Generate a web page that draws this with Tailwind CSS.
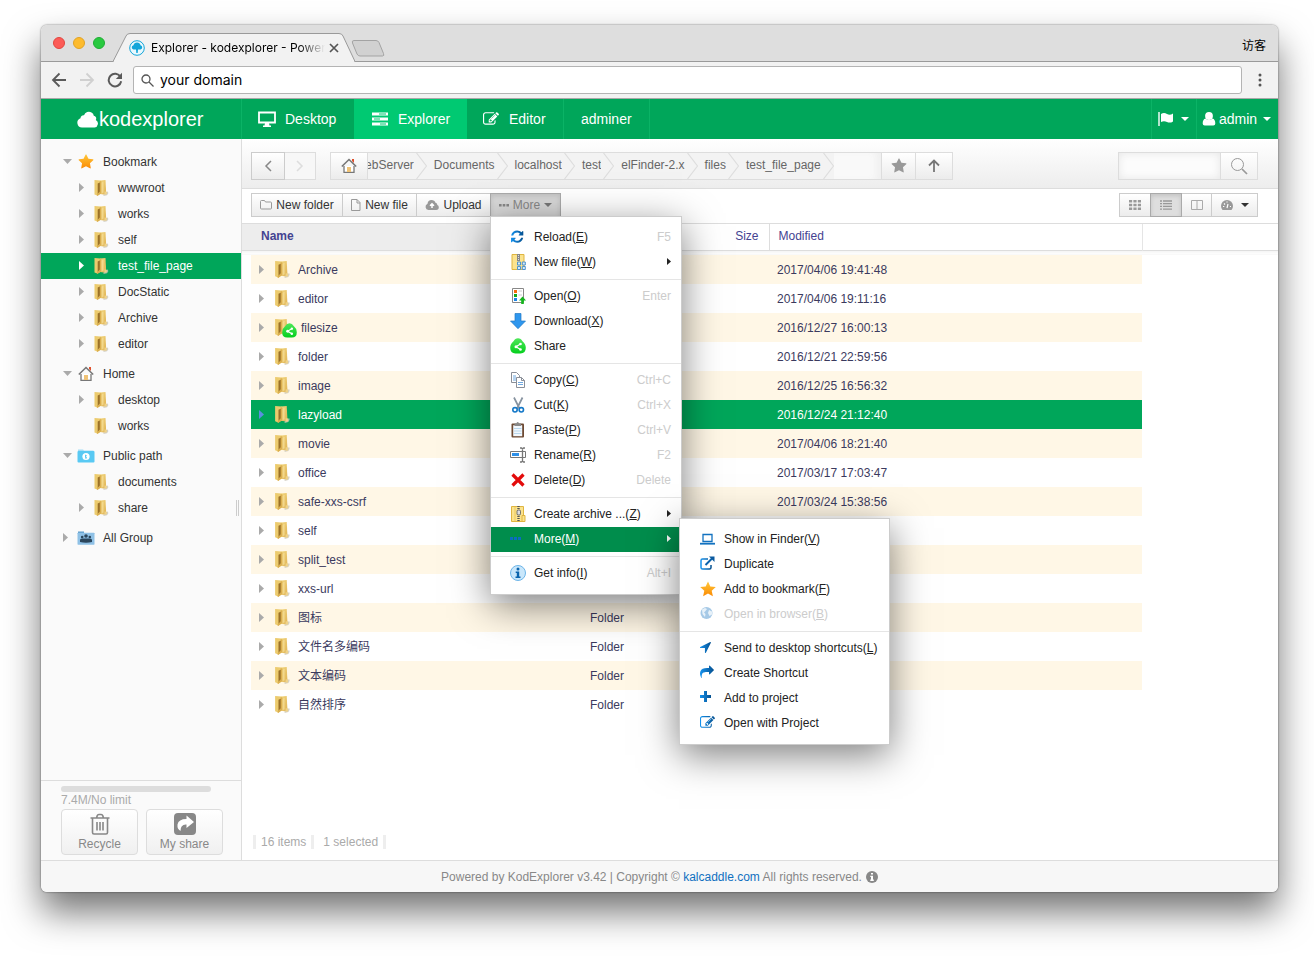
<!DOCTYPE html>
<html lang="en">
<head>
<meta charset="utf-8">
<title>Explorer - kodexplorer</title>
<script src="https://cdn.jsdelivr.net/npm/@tailwindcss/browser@4"></script>
</head>
<body class="bg-white font-['Liberation_Sans','Noto_Sans_CJK_SC',sans-serif] text-xs text-[#333]">

<!-- Shared icon symbols -->
<svg width="0" height="0" class="absolute" aria-hidden="true">
  <defs>
    <linearGradient id="gold" x1="0" x2="1" y1="0" y2="1"><stop offset="0" stop-color="#f3d780"/><stop offset="1" stop-color="#e0b455"/></linearGradient>
    <linearGradient id="blue" x1="0" x2="1" y1="0" y2="0"><stop offset="0" stop-color="#1592ee"/><stop offset="1" stop-color="#05508f"/></linearGradient>
    <linearGradient id="sun" x1="0" x2="0" y1="0" y2="1"><stop offset="0" stop-color="#ffc83a"/><stop offset="1" stop-color="#fb8a04"/></linearGradient>
    <linearGradient id="lime" x1="0" x2="0" y1="0" y2="1"><stop offset="0" stop-color="#4fe75a"/><stop offset="1" stop-color="#04cf1d"/></linearGradient>
  </defs>
  <symbol id="folder" viewBox="0 0 16 18">
    <path d="M10 14l4.500-1.500q1 2-1 3.700L10 17z" fill="#c9c5b8" opacity=".8"/>
    <path d="M6.500 1.500L12 1l.7 13-2.700 1.500-3.500-.5z" fill="url(#gold)"/>
    <path d="M1 1l6 .5v13.500l-3 1.500-3-1z" fill="#eccb6e"/>
    <path d="M4.200 4.500L7.300 3v9.500l-3.100 2.700z" fill="#9a7129"/>
    <path d="M6.300 2l1.700.5v11.500l-4 3-1-1 3.300-3.500z" fill="#dbaf4f"/>
    <path d="M8 3.500l2-1v11l-2 1z" fill="#f6e09a" opacity=".7"/>
    <path d="M11 12.500l2.300.3v2.500L11 16z" fill="#efd289"/>
  </symbol>
  <symbol id="star" viewBox="0 0 1792 1792"><path d="M1728 647q0 22-26 48l-363 354 86 500q1 7 1 20 0 21-10.500 35.500t-30.500 14.500q-19 0-40-12l-449-236-449 236q-22 12-40 12-21 0-31.500-14.500t-10.500-35.500q0-6 2-20l86-500-364-354q-25-27-25-48 0-37 56-46l502-73 225-455q19-41 49-41t49 41l225 455 502 73q56 9 56 46z"/></symbol>
  <symbol id="house" viewBox="0 0 16 16">
    <path d="M11 1h2v4l-2-2z" fill="#e0502c"/>
    <path d="M3 8v6.300h10V8" fill="#fff" stroke="#777" stroke-width="1.300"/>
    <path d="M.8 8.500L8 1.500l7.200 7" fill="none" stroke="#777" stroke-width="1.600"/>
    <path d="M6 9h4v5H6z" fill="#f0c376"/>
  </symbol>
  <symbol id="pubfolder" viewBox="0 0 18 14">
    <path d="M1 .5h5l1 1h9.500v3H1z" fill="#a5def5"/><rect x=".5" y="2" width="17" height="11.500" rx="1" fill="#59c9f3"/>
    <circle cx="9" cy="7.500" r="3.600" fill="#fff"/><path d="M8 5.500l2 1-1 1 1.200 1.500-1.600 1-.6-2z" fill="#59c9f3"/>
  </symbol>
  <symbol id="groupfolder" viewBox="0 0 18 14">
    <path d="M1 .5h6v3H1z" fill="#5d9ccb"/><rect x=".5" y="1.700" width="17" height="12" rx=".6" fill="#8fc1e6"/>
    <g fill="#2b465c"><circle cx="9" cy="5" r="1.800"/><circle cx="5.200" cy="6" r="1.300"/><circle cx="12.800" cy="6" r="1.300"/><path d="M3 11V9q0-1.500 2-1.500h8q2 0 2 1.500v2q-6 1.500-12 0z"/></g>
  </symbol>
  <symbol id="edit" viewBox="0 0 1792 1792"><path d="M888 1184l116-116-152-152-116 116v56h96v96h56zm440-720q-16-16-33 1l-350 350q-17 17-1 33t33-1l350-350q17-17 1-33zm80 594v190q0 119-84.500 203.500t-203.500 84.500h-832q-119 0-203.500-84.500t-84.500-203.500v-832q0-119 84.500-203.500t203.500-84.500h832q63 0 117 25 15 7 18 23 3 17-9 29l-49 49q-14 14-32 8-23-6-45-6h-832q-66 0-113 47t-47 113v832q0 66 47 113t113 47h832q66 0 113-47t47-113v-126q0-13 9-22l64-64q15-15 35-7t20 29zm-96-738l288 288-672 672h-288v-288zm444 132l-92 92-288-288 92-92q28-28 68-28t68 28l152 152q28 28 28 68t-28 68z"/></symbol>
  <symbol id="fwd" viewBox="0 0 1792 1792"><path d="M1792 640q0 26-19 45l-512 512q-19 19-45 19t-45-19-19-45v-256h-224q-98 0-175.500 6t-154 21.500-133 42.500-105.500 69.500-80 101-48.500 138.500-17.500 181q0 55 5 123 0 6 2.500 23.500t2.500 26.500q0 15-8.500 25t-23.500 10q-16 0-28-17-7-9-13-22t-13.500-30-10.500-24q-127-285-127-451 0-199 53-333 162-403 875-403h224v-256q0-26 19-45t45-19 45 19l512 512q19 19 19 45z"/></symbol>
  <symbol id="sharebadge" viewBox="0 0 16 16">
    <path d="M8 .3q3 0 4.500 3 3.300 2.700 3.300 6.500 0 5.700-5.300 5.700h-5Q.2 15.500.2 9.800.2 6 3.500 3.300 5 .3 8 .3z" fill="url(#lime)"/>
    <path d="M10.500 6L6 8.800l4.500 2.700" fill="none" stroke="#fff" stroke-width="1.200"/><g fill="#fff"><circle cx="10.500" cy="6" r="1.300"/><circle cx="6" cy="8.800" r="1.500"/><circle cx="10.500" cy="11.500" r="1.300"/></g>
  </symbol>
  <symbol id="zip" viewBox="0 0 16 16">
    <path d="M1.500.5h12v15h-12z" fill="#fbe38e" stroke="#dfb540"/><path d="M12 9.500h3v6h-3z" fill="#fbe38e" stroke="#dfb540"/><path d="M5 1v14" stroke="#ebc95c"/>
    <path d="M8.500 0v16" stroke="#555" stroke-width="2.400" stroke-dasharray="1 1"/><rect x="7" y="4" width="3.500" height="5" rx="1.200" fill="#ddd" stroke="#555" stroke-width=".8"/>
  </symbol>
</svg>

<div class="flex min-h-screen flex-col pt-[25px] pr-9 pb-[66px] pl-[41px]">
<div class="flex flex-1 flex-col rounded-md bg-white shadow-[0_0_2px_rgba(0,0,0,0.6),0_20px_36px_rgba(0,0,0,0.55)]">

  <!-- Tab strip -->
  <div class="flex h-[37px] items-end rounded-t-md border-b border-[#9a9a9a] bg-[#dedede]">
    <div class="flex gap-2 self-center pl-3">
      <span class="size-3 rounded-full border border-[#e2463f] bg-[#fc5b57]"></span>
      <span class="size-3 rounded-full border border-[#e1a325] bg-[#fdbb2e]"></span>
      <span class="size-3 rounded-full border border-[#1fae34] bg-[#29c940]"></span>
    </div>
    <div class="relative ml-2 -mb-px h-[29px] w-[242px]">
      <svg class="absolute inset-0 h-full w-full" viewBox="0 0 242 29" fill="none" aria-hidden="true"><path d="M0 28.500L13 3Q14 .5 17 .5H226q3 0 4 2.500l12 25.500" fill="#f2f2f2" stroke="#9a9a9a"/><path d="M1 28.500H241" stroke="#f2f2f2" stroke-width="1.500"/></svg>
      <div class="relative flex h-full items-center pl-4 font-['Inter',sans-serif] text-black">
        <svg class="mr-1.5 size-4" viewBox="0 0 16 16" aria-hidden="true"><circle cx="8" cy="8" r="7.300" fill="#e9f8fd" stroke="#12a5d9"/><path d="M4.500 9.500a2.200 2.200 0 010-4.300 3.600 3.600 0 017 0 2.200 2.200 0 010 4.300H9l-.3 3.500H7.300L7 9.500z" fill="#12a5d9"/></svg>
        <span class="w-[174px] overflow-hidden whitespace-nowrap [mask-image:linear-gradient(to_right,black_85%,transparent)]">Explorer - kodexplorer - Powered</span>
        <button class="ml-1" aria-label="Close tab"><svg class="size-2.5" viewBox="0 0 10 10"><path d="M1 1l8 8m0-8L1 9" stroke="#555" stroke-width="1.700"/></svg></button>
      </div>
    </div>
    <svg class="mb-1 -ml-1 h-[17px] w-[34px]" viewBox="0 0 34 17" aria-hidden="true"><path d="M3 .5h22q2 0 3 2l4.500 11q1 2.500-1 2.500H9q-2 0-3-2L1.500 3Q.5.500 3 .5z" fill="#d1d1d1" stroke="#a3a3a3"/></svg>
    <span class="mr-3 ml-auto self-center pt-1 font-['Noto_Sans_CJK_SC',sans-serif] leading-5 text-black">访客</span>
  </div>

  <!-- Address bar -->
  <div class="flex h-[37px] items-center border-b border-[#a8a8a8] bg-[#f2f2f2] pl-2.5">
    <button class="mr-3" aria-label="Back"><svg class="size-4" viewBox="0 0 16 16" fill="none" stroke="#5a5a5a" stroke-width="1.800"><path d="M15 8H2M8.500 1.500L2 8l6.500 6.500"/></svg></button>
    <button class="mr-3" aria-label="Forward"><svg class="size-4" viewBox="0 0 16 16" fill="none" stroke="#d0d0d0" stroke-width="1.800"><path d="M1 8h13M7.500 1.500L14 8l-6.500 6.500"/></svg></button>
    <button class="mr-2.5" aria-label="Reload"><svg class="size-4" viewBox="0 0 16 16" fill="none"><path d="M13.500 5A6.300 6.300 0 1014.200 9.300" stroke="#5a5a5a" stroke-width="2"/><path d="M15 .8v6.200H8.800z" fill="#5a5a5a"/></svg></button>
    <label class="flex h-7 flex-1 items-center gap-1.5 rounded-[3px] border border-[#b4b4b4] bg-white pl-[7px]">
      <svg class="size-[13px]" viewBox="0 0 13 13" fill="none" stroke="#555" stroke-width="1.300" aria-hidden="true"><circle cx="5" cy="5" r="4"/><path d="M8 8l4.500 4.500"/></svg>
      <input class="flex-1 font-['Inter',sans-serif] text-sm text-black outline-none" value="your domain" aria-label="Address">
    </label>
    <button class="px-4" aria-label="Browser menu"><svg class="h-3.5 w-1" viewBox="0 0 4 14" fill="#555"><circle cx="2" cy="2" r="1.500"/><circle cx="2" cy="7" r="1.500"/><circle cx="2" cy="12" r="1.500"/></svg></button>
  </div>

  <!-- Application header -->
  <header class="flex h-10 items-stretch bg-[#00a65a] text-sm text-white">
    <a href="#" class="flex w-[201px] items-center border-r border-[#0bb366] pl-9 text-xl">
      <svg class="h-[17px] w-[22px]" viewBox="0 0 22 17" fill="#fff" aria-hidden="true"><path d="M5 16.500a4.800 4.800 0 01-1.500-9.300 3 3 0 013.500-3A5.200 5.200 0 0114.500 1.500q2 1 2.300 3.300a2.800 2.800 0 012 4.200 4 4 0 01-1.300 7.500z"/></svg>kodexplorer</a>
    <nav class="flex flex-1 items-stretch">
      <a href="#" class="flex w-28 items-center gap-[9px] pl-4"><svg class="h-4 w-[18px]" viewBox="0 0 18 16" aria-hidden="true"><path d="M1 1.500h16v10H1z" fill="none" stroke="#fff" stroke-width="1.800"/><path d="M7 12h4l.5 2.500H13V16H5v-1.500h1.500z" fill="#fff"/></svg>Desktop</a>
      <a href="#" class="flex w-[113px] items-center gap-2.5 bg-[#00c972] pl-[18px]"><svg class="h-3.5 w-4" viewBox="0 0 16 14" aria-hidden="true"><path d="M0 .5h16v3H0zM0 5.500h16v3H0zM0 10.500h16v3H0z" fill="#fff"/><path d="M7 2h7M2 7h6M8 12h6" stroke="#00c972"/></svg>Explorer</a>
      <a href="#" class="flex w-[97px] items-center gap-2.5 border-r border-[#0bb366] pl-4"><svg class="size-4" fill="#fff" aria-hidden="true"><use href="#edit"/></svg>Editor</a>
      <a href="#" class="flex w-[86px] items-center border-r border-[#0bb366] pl-[17px]">adminer</a>
    </nav>
    <button class="flex w-[46px] items-center gap-[7px] border-x border-[#0bb366] pl-1.5" aria-label="Language"><svg class="h-3.5 w-4 shrink-0" viewBox="0 0 16 14" aria-hidden="true"><path d="M1 0v14" stroke="#fff" stroke-width="1.400"/><path d="M3 2q3-2 6 0 3 1.500 6-.6v8q-3 2-6 .6-3-1.500-6 0z" fill="#fff"/></svg><svg class="h-1 w-2 shrink-0" viewBox="0 0 8 4" fill="#fff"><path d="M0 0h8L4 4z"/></svg></button>
    <button class="flex w-[81px] items-center gap-0.5 pl-1"><svg class="size-4" fill="#fff" viewBox="0 0 16 16" aria-hidden="true"><circle cx="8" cy="5" r="3.900"/><path d="M4.500 7.500Q8 10.500 11.500 7.500 14.300 8.300 14.300 12.500q0 2-2 2H3.700q-2 0-2-2 0-4.200 2.800-5z"/></svg>admin<svg class="ml-1 h-1 w-2" viewBox="0 0 8 4" fill="#fff" aria-hidden="true"><path d="M0 0h8L4 4z"/></svg></button>
  </header>

  <div class="flex flex-1">
    <!-- Sidebar -->
    <aside class="relative flex w-[201px] flex-col border-r border-[#ddd] bg-[#fafafa]">
      <ul id="tree" class="flex-1 pt-2.5"></ul>
      <span class="absolute top-1/2 right-0.5 h-4 w-[3px] border-x border-[#ccc]"></span>
      <div class="h-20 border-t border-[#ddd] px-5 pt-[5px]">
        <div class="h-1.5 w-[150px] rounded-full bg-[#ddd]"></div>
        <p class="pt-0.5 leading-3 text-[#aaa]">7.4M/No limit</p>
        <div class="mt-[3px] flex gap-2 text-[#888]">
          <button class="flex h-[46px] w-[77px] shrink-0 flex-col items-center rounded-sm border border-[#ddd] bg-linear-to-b from-white to-[#f0f0f0] pt-[3px] leading-[18px]"><svg class="size-[22px]" viewBox="0 0 22 22" fill="none" stroke="#888" stroke-width="1.600" aria-hidden="true"><path d="M1.500 5h19M7.500 5l.8-2.500q.3-1 1.500-1h2.400q1.200 0 1.500 1l.8 2.500M3.500 5v14.500q0 1.500 1.500 1.500h12q1.500 0 1.500-1.500V5M8 9v8.500M11 9v8.500M14 9v8.500"/></svg>Recycle</button>
          <button class="flex h-[46px] w-[77px] shrink-0 flex-col items-center rounded-sm border border-[#ddd] bg-linear-to-b from-white to-[#f0f0f0] pt-[3px] leading-[18px]"><svg class="size-[22px]" viewBox="0 0 22 22" aria-hidden="true"><rect width="22" height="22" rx="4" fill="#888"/><path d="M12.500 2.500l7.500 6.500-7.500 6v-3.500q-6-.5-6 6.500Q3 16 3.500 11.500 4.500 6 12.500 6z" fill="#fff"/></svg>My share</button>
        </div>
      </div>
    </aside>

    <!-- File area -->
    <main class="flex min-w-0 flex-1 flex-col">
      <div class="flex h-[50px] items-center border-b border-[#ddd] bg-linear-to-b from-white to-[#ededed] pt-1 pr-5 pl-[9px]">
        <button class="flex h-7 w-[34px] items-center justify-center border border-[#ccc] bg-linear-to-b from-white to-[#ececec]" aria-label="Back"><svg class="h-3 w-2" viewBox="0 0 8 12" fill="none" stroke="#888" stroke-width="1.500"><path d="M7 1L2 6l5 5"/></svg></button>
        <button class="mr-3.5 flex h-7 w-[31px] items-center justify-center border border-l-0 border-[#ddd] bg-[#f7f7f7]" aria-label="Forward"><svg class="h-3 w-2" viewBox="0 0 8 12" fill="none" stroke="#ddd" stroke-width="1.500"><path d="M1 1l5 5-5 5"/></svg></button>
        <button class="z-10 flex h-7 w-[38px] items-center justify-center border border-[#ddd] bg-linear-to-b from-white to-[#ececec]" aria-label="Home"><svg class="size-4" aria-hidden="true"><use href="#house"/></svg></button>
        <nav id="crumbs" aria-label="Path" class="flex h-7 w-[513px] overflow-hidden border-y border-[#ddd] bg-[#f9f9f9] text-[#666] shadow-[inset_-8px_0_8px_-4px_#eee]"></nav>
        <button class="flex h-7 w-[35px] items-center justify-center border border-[#ddd] bg-linear-to-b from-white to-[#ececec]" aria-label="Bookmark"><svg class="size-4" fill="#999" aria-hidden="true"><use href="#star"/></svg></button>
        <button class="flex h-7 w-[37px] items-center justify-center border border-l-0 border-[#ddd] bg-linear-to-b from-white to-[#ececec]" aria-label="Up"><svg class="h-[13px] w-3" viewBox="0 0 12 13" fill="none" stroke="#777" stroke-width="1.800"><path d="M6 13V1.500M1 6.500l5-5 5 5"/></svg></button>
        <input type="search" aria-label="Search" class="ml-auto h-7 w-[103px] border border-[#ddd] bg-[#fcfcfc] px-2 shadow-[inset_0_0_8px_#e6e6e6] outline-none">
        <button class="flex h-7 w-[37px] items-center justify-center border border-l-0 border-[#ddd] bg-linear-to-b from-white to-[#f0f0f0]" aria-label="Search"><svg class="size-[18px]" viewBox="0 0 18 18" fill="none" stroke="#999"><circle cx="7.500" cy="7.500" r="6"/><path d="M12 12l5 5" stroke-width="1.700"/></svg></button>
      </div>

      <div class="flex h-[35px] items-center border-b border-[#ddd] bg-white pr-5 pb-0.5 pl-[9px]">
        <button class="flex h-6 w-[92px] items-center justify-center gap-1 border border-[#ccc] bg-linear-to-b from-white to-[#ececec] whitespace-nowrap"><svg class="h-3 w-3 shrink-0" viewBox="0 0 12 12" fill="none" stroke="#999" aria-hidden="true"><path d="M.5 2.500q0-1 1-1h3l1 1.500h5q1 0 1 1v5q0 1-1 1h-9q-1 0-1-1z"/></svg>New folder</button>
        <button class="flex h-6 w-[74px] items-center justify-center gap-1 border border-l-0 border-[#ccc] bg-linear-to-b from-white to-[#ececec] whitespace-nowrap"><svg class="h-3 w-2.5 shrink-0" viewBox="0 0 10 12" fill="none" stroke="#999" aria-hidden="true"><path d="M.5.5h5.500l3 3v8H.500zM6 .5V4h3"/></svg>New file</button>
        <button class="flex h-6 w-[73px] items-center justify-center gap-1 border border-x-0 border-[#ccc] bg-linear-to-b from-white to-[#ececec]"><svg class="h-3 w-3.5 shrink-0" viewBox="0 0 14 12" aria-hidden="true"><path d="M3.500 11a3.300 3.300 0 01-1-6.300Q3 1 6.500 1q3 0 4 2.800Q12.500 4 12.300 6q1.500.6 1.500 2.300 0 2.700-2.600 2.700z" fill="#999"/><path d="M7 9V5M5 6.800l2-2 2 2" stroke="#fff" stroke-width="1.500" fill="none"/></svg>Upload</button>
        <div class="relative">
          <button class="flex h-6 w-[71px] items-center justify-center gap-1 border border-[#aaa] bg-[#d9d9d9] text-[#888] shadow-[inset_0_2px_5px_rgba(0,0,0,0.12)]" aria-expanded="true" aria-haspopup="menu"><svg class="h-[3px] w-2.5" viewBox="0 0 10 3" fill="#888" aria-hidden="true"><path d="M0 0h2.600v2.600H0zM3.700 0h2.600v2.600H3.700zM7.400 0H10v2.600H7.400z"/></svg>More<svg class="h-1 w-2" viewBox="0 0 8 4" fill="#777" aria-hidden="true"><path d="M0 0h8L4 4z"/></svg></button>

          <!-- "More" drop-down -->
          <div role="menu" class="absolute top-[23px] left-0 z-20 w-48 border border-[#ccc] bg-white py-2 text-[#222] shadow-[0_10px_36px_rgba(0,0,0,0.5)]">
            <button role="menuitem" class="flex h-[25px] w-full items-center pr-2.5 pb-0.5 pl-[19px]"><svg class="mr-2 h-4 w-4" viewBox="0 -60 2000 2000" fill="url(#blue)"><path d="M1639 1056q0 5-1 7-64 268-268 434.500t-478 166.500q-146 0-282.500-55t-243.500-157l-129 129q-19 19-45 19t-45-19-19-45v-448q0-26 19-45t45-19h448q26 0 45 19t19 45-19 45l-137 137q71 66 161 102t187 36q134 0 250-65t186-179q11-17 53-117 8-23 30-23h192q13 0 22.500 9.500t9.500 22.500zm25-800v448q0 26-19 45t-45 19h-448q-26 0-45-19t-19-45 19-45l138-138q-148-137-349-137-134 0-250 65t-186 179q-11 17-53 117-8 23-30 23h-199q-13 0-22.500-9.500t-9.500-22.500v-7q65-268 270-434.500t480-166.500q146 0 284 55.500t245 156.500l130-129q19-19 45-19t45 19 19 45z"/></svg><span>Reload(<u>E</u>)</span><span class="ml-auto text-[#ccc]">F5</span></button>
            <button role="menuitem" class="flex h-[25px] w-full items-center pr-2.5 pb-0.5 pl-[19px]"><svg class="mr-2 size-4" viewBox="0 0 16 16"><path d="M2 .5h12v15H2z" fill="#fbe38e" stroke="#dfb540"/><path d="M8.500 0v7" stroke="#888" stroke-width="3"/><path d="M8.500 1v5" stroke="#ddd" stroke-dasharray="1 1"/><path d="M7.500 8h3v3h-3zM12.300 8h3v3h-3zM7.500 12.500h3v3h-3zM12.300 12.500h3v3h-3z" fill="#d5eafa" stroke="#4f93cc"/></svg><span>New file(<u>W</u>)</span><svg class="ml-auto h-[7px] w-1" viewBox="0 0 4 7"><path d="M0 0l4 3.500L0 7z" fill="#222"/></svg></button>
            <hr class="my-1 border-[#e5e5e5]">
            <button role="menuitem" class="flex h-[25px] w-full items-center pr-2.5 pb-0.5 pl-[19px]"><svg class="mr-2 size-4" viewBox="0 0 16 16"><path d="M2.500.5h11v14h-11z" fill="#fff" stroke="#888"/><path d="M4 2h3v3H4z" fill="#f76a0c"/><path d="M4 6h3v3H4z" fill="#14a81c"/><path d="M4 10h3v3H4z" fill="#1d86e8"/><path d="M8.500 3H12M8.500 7H12" stroke="#ccc"/><path d="M12.500 8.500l3.500 4h-2.200V16h-2.600v-3.500H9z" fill="#14b51c"/></svg><span>Open(<u>O</u>)</span><span class="ml-auto text-[#ccc]">Enter</span></button>
            <button role="menuitem" class="flex h-[25px] w-full items-center pr-2.5 pb-0.5 pl-[19px]"><svg class="mr-2 size-4" viewBox="0 0 16 16"><path d="M5 .5h6V8h4.500L8 15.700.5 8H5z" fill="#2f97ee" stroke="#2279c4" stroke-width=".7"/></svg><span>Download(<u>X</u>)</span></button>
            <button role="menuitem" class="flex h-[25px] w-full items-center pr-2.5 pb-0.5 pl-[19px]"><svg class="mr-2 size-4"><use href="#sharebadge"/></svg>Share</button>
            <hr class="my-1 border-[#e5e5e5]">
            <button role="menuitem" class="flex h-[25px] w-full items-center pr-2.5 pb-0.5 pl-[19px]"><svg class="mr-2 size-4" viewBox="0 0 16 16" fill="#fff" stroke="#8a8f98"><path d="M1.500.5h5l3 3v7h-8z"/><path d="M6.500 5.500h5l3 3v7h-8z"/><path d="M11.500 5.500v3h3" fill="none"/><path d="M3 4h3M3 6h3M3 8h3M8 10.500h5M8 12.500h5" stroke="#6fa8e0"/></svg><span>Copy(<u>C</u>)</span><span class="ml-auto text-[#ccc]">Ctrl+C</span></button>
            <button role="menuitem" class="flex h-[25px] w-full items-center pr-2.5 pb-0.5 pl-[19px]"><svg class="mr-2 size-4" viewBox="0 0 16 16" fill="none"><path d="M4 .5l5.500 11M12.500.5L7 11.500" stroke="#8793a0" stroke-width="1.700"/><circle cx="5" cy="12.800" r="2.200" stroke="#1478c8" stroke-width="1.600"/><circle cx="11.300" cy="12.800" r="2.200" stroke="#1478c8" stroke-width="1.600"/></svg><span>Cut(<u>K</u>)</span><span class="ml-auto text-[#ccc]">Ctrl+X</span></button>
            <button role="menuitem" class="flex h-[25px] w-full items-center pr-2.5 pb-0.5 pl-[19px]"><svg class="mr-2 size-4" viewBox="0 0 16 16"><rect x="1.500" y="1.500" width="12.500" height="14" rx="1" fill="#6d4a33"/><path d="M3.200 3.200h9v11h-9z" fill="#f2f8fd"/><path d="M4 6.500h7.500M4 9h7.500M4 11.500h7.500" stroke="#b9d8ee"/><path d="M4.500 1.500h2q0-1.500 1.200-1.500T9 1.500h2V4H4.500z" fill="#888"/></svg><span>Paste(<u>P</u>)</span><span class="ml-auto text-[#ccc]">Ctrl+V</span></button>
            <button role="menuitem" class="flex h-[25px] w-full items-center pr-2.5 pb-0.5 pl-[19px]"><svg class="mr-2 size-4" viewBox="0 0 16 16" fill="none" stroke="#777"><path d="M.5 4.500h15v6H.5z" fill="#fff"/><path d="M2 6h7v3H2z" fill="#2c8fe8" stroke="none"/><path d="M12.500 1.500v13M10 1h1.500l1 1 1-1H15M10 15h1.500l1-1 1 1H15" stroke-width="1.300"/></svg><span>Rename(<u>R</u>)</span><span class="ml-auto text-[#ccc]">F2</span></button>
            <button role="menuitem" class="flex h-[25px] w-full items-center pr-2.5 pb-0.5 pl-[19px]"><svg class="mr-2 size-4" viewBox="0 0 16 16"><path d="M2.500 2.500l11 11m0-11l-11 11" stroke="#e30b0b" stroke-width="3.200"/></svg><span>Delete(<u>D</u>)</span><span class="ml-auto text-[#ccc]">Delete</span></button>
            <hr class="my-1 border-[#e5e5e5]">
            <button role="menuitem" class="flex h-[25px] w-full items-center pr-2.5 pb-0.5 pl-[19px]"><svg class="mr-2 size-4"><use href="#zip"/></svg><span>Create archive ...(<u>Z</u>)</span><svg class="ml-auto h-[7px] w-1" viewBox="0 0 4 7"><path d="M0 0l4 3.500L0 7z" fill="#222"/></svg></button>
            <div class="relative">
              <button role="menuitem" aria-expanded="true" class="flex h-[25px] w-full items-center bg-[#008d4c] pr-2.5 pb-0.5 pl-[19px] text-white"><svg class="mr-2 size-4" viewBox="0 0 16 16" fill="#0a6cc0"><path d="M0 6h3v3H0zM4 6h3v3H4zM8 6h3v3H8z"/></svg><span>More(<u>M</u>)</span><svg class="ml-auto h-[7px] w-1" viewBox="0 0 4 7"><path d="M0 0l4 3.500L0 7z" fill="#fff"/></svg></button>
              <div role="menu" class="absolute -top-[9px] left-[188px] w-[211px] border border-[#ccc] bg-white py-2 shadow-[0_10px_36px_rgba(0,0,0,0.5)]">
                <button role="menuitem" class="flex h-[25px] w-full items-center pb-0.5 pl-5 whitespace-nowrap"><svg class="mr-2 size-4" viewBox="0 0 16 16" fill="none" stroke="#1272c0" stroke-width="1.300"><path d="M3 3.500h9v7H3z"/><path d="M0 12.700h15" stroke-width="1.800"/></svg><span>Show in Finder(<u>V</u>)</span></button>
                <button role="menuitem" class="flex h-[25px] w-full items-center pb-0.5 pl-5 whitespace-nowrap"><svg class="mr-2 size-4" viewBox="0 0 16 16" fill="none" stroke="url(#blue)"><path d="M8 3H2.500Q1 3 1 4.500v7Q1 13 2.500 13h7q1.500 0 1.500-1.500V9" stroke-width="1.500"/><path d="M5.500 9L12 2.500" stroke="#0b62ac" stroke-width="2"/><path d="M9 .5h5.500V6z" fill="#0b5a9f" stroke="none"/></svg>Duplicate</button>
                <button role="menuitem" class="flex h-[25px] w-full items-center pb-0.5 pl-5 whitespace-nowrap"><svg class="mr-2 size-4" viewBox="0 0 16 16" fill="url(#sun)"><path d="M8 .5l2.300 5 5.500.6-4.100 3.700 1.200 5.500L8 12.500l-4.900 2.800 1.200-5.500L.2 6.100l5.500-.6z"/></svg><span>Add to bookmark(<u>F</u>)</span></button>
                <button role="menuitem" disabled class="flex h-[25px] w-full items-center pb-0.5 pl-5 whitespace-nowrap text-[#ccc]"><svg class="mr-2 size-4" viewBox="0 0 16 16"><circle cx="6.500" cy="7" r="6" fill="#a6c9e6"/><path d="M2 3.500l3-1.500 2 1-1.500 2L4 6.500l1.500 1.500-.5 3L2.500 8zM9 4l3 1.500v3L9.500 10 8 7z" fill="#e7f1f9"/></svg><span>Open in browser(<u>B</u>)</span></button>
                <hr class="my-1 border-[#e5e5e5]">
                <button role="menuitem" class="flex h-[25px] w-full items-center pb-0.5 pl-5 whitespace-nowrap"><svg class="mr-2 size-4" viewBox="200 0 2048 2048" fill="url(#blue)"><path d="M1593 349l-640 1280q-17 35-57 35-5 0-15-2-22-5-35.500-22.500t-13.500-39.500v-576h-576q-22 0-39.500-13.500t-22.500-35.500 4-42 29-30l1280-640q13-7 29-7 27 0 45 19 15 14 18.500 34.500t-6.500 39.500z"/></svg><span>Send to desktop shortcuts(<u>L</u>)</span></button>
                <button role="menuitem" class="flex h-[25px] w-full items-center pb-0.5 pl-5 whitespace-nowrap"><svg class="mr-2 size-4" fill="url(#blue)"><use href="#fwd" width="14" height="14"/></svg>Create Shortcut</button>
                <button role="menuitem" class="flex h-[25px] w-full items-center pb-0.5 pl-5 whitespace-nowrap"><svg class="mr-2 size-4" viewBox="0 0 16 16" fill="url(#blue)"><path d="M4 1h3v4h4v3H7v4H4V8H0V5h4z"/></svg>Add to project</button>
                <button role="menuitem" class="flex h-[25px] w-full items-center pb-0.5 pl-5 whitespace-nowrap"><svg class="mr-2 size-4" fill="url(#blue)"><use href="#edit" width="15" height="15"/></svg>Open with Project</button>
              </div>
            </div>
            <hr class="my-1 border-[#e5e5e5]">
            <button role="menuitem" class="flex h-[25px] w-full items-center pr-2.5 pb-0.5 pl-[19px]"><svg class="mr-2 size-4" viewBox="0 0 16 16"><circle cx="8" cy="8" r="7.500" fill="#c9e7fb" stroke="#6db5e8"/><circle cx="8" cy="4" r="1.500" fill="#0a64ad"/><path d="M5.700 6.500h3.500v5h1.300V13h-5v-1.500h1.300V8H5.700z" fill="#0a64ad"/></svg><span>Get info(<u>I</u>)</span><span class="ml-auto text-[#ccc]">Alt+I</span></button>
          </div>
        </div>
        <div class="ml-auto flex">
          <button class="flex h-6 w-8 items-center justify-center border border-[#ccc] bg-linear-to-b from-white to-[#ececec]" aria-label="Icons"><svg class="h-2.5 w-3" viewBox="0 0 12 10" fill="#999"><path d="M0 0h3.200v2.600H0zM4.400 0h3.200v2.600H4.400zM8.800 0H12v2.600H8.800zM0 3.700h3.200v2.600H0zM4.400 3.700h3.200v2.600H4.400zM8.800 3.700H12v2.600H8.800zM0 7.400h3.200V10H0zM4.400 7.400h3.200V10H4.400zM8.800 7.400H12V10H8.800z"/></svg></button>
          <button class="-ml-px flex h-6 w-8 items-center justify-center border border-[#aaa] bg-[#dedede] shadow-[inset_0_2px_4px_rgba(0,0,0,0.12)]" aria-label="List"><svg class="h-2.5 w-3" viewBox="0 0 12 10" stroke="#999" stroke-width="1.300"><path d="M0 1h2M3 1h9M0 3.700h2M3 3.700h9M0 6.400h2M3 6.400h9M0 9.100h2M3 9.100h9"/></svg></button>
          <button class="flex h-6 w-[30px] items-center justify-center border border-l-0 border-[#ccc] bg-linear-to-b from-white to-[#ececec]" aria-label="Columns"><svg class="h-2.5 w-3" viewBox="0 0 12 10" fill="none" stroke="#aaa"><path d="M.5.500h11v9H.5zM6 0v10"/></svg></button>
          <button class="flex h-6 w-[46px] items-center justify-center gap-2 border border-l-0 border-[#ccc] bg-linear-to-b from-white to-[#ececec]" aria-label="View size"><svg class="h-2.5 w-3" viewBox="0 0 12 10"><path d="M1.500 10Q0 8.500 0 6a6 6 0 0112 0q0 2.500-1.500 4z" fill="#999"/><path d="M6 8l1-4M2 6.500h1.300M3 3.500l1 1M6 1.500v1M10 6.500H8.900" stroke="#fff" stroke-width="1.200"/></svg><svg class="h-1 w-2" viewBox="0 0 8 4" fill="#333"><path d="M0 0h8L4 4z"/></svg></button>
        </div>
      </div>

      <table class="w-full table-fixed border-collapse text-left text-[#3b3a5e]">
        <colgroup><col class="w-[9px]"><col><col class="w-[130px]"><col class="w-[58px]"><col class="w-[373px]"><col class="w-[136px]"></colgroup>
        <thead class="text-[#444391]">
          <tr class="h-[26px] border-b border-[#ddd] bg-white">
            <th class="bg-[#ededed]"></th><th class="bg-[#ededed] pb-0.5 pl-2.5">Name</th><th aria-label="Kind"></th><th class="border-r border-[#ddd] pr-2.5 pb-0.5 text-right font-normal">Size</th><th class="border-r border-[#e5e5e5] pb-0.5 pl-[9px] font-normal">Modified</th><th></th>
          </tr>
        </thead>
        <tbody id="files"></tbody>
      </table>

      <div class="mt-auto flex items-center gap-[5px] px-[11px] pb-2.5 leading-4 text-[#aaa]">
        <span class="h-3.5 w-[3px] bg-[#eee]"></span><span>16 items</span><span class="h-3.5 w-[3px] bg-[#eee]"></span><span class="pl-1">1 selected</span><span class="h-3.5 w-[3px] bg-[#eee]"></span>
      </div>
    </main>
  </div>

  <footer class="flex h-8 items-center justify-center gap-1 rounded-b-md border-t border-[#ddd] bg-[#f7f7f7] text-[#888]">
    <span>Powered by KodExplorer v3.42 | Copyright © <a href="#" class="text-[#1070c0]">kalcaddle.com</a> All rights reserved.</span>
    <svg class="size-3" viewBox="0 0 12 12" aria-hidden="true"><circle cx="6" cy="6" r="6" fill="#888"/><path d="M5 2h2v1.600H5zM4.300 4.700H7v3.800h.8V10H4.300V8.500H5V6h-.7z" fill="#fff"/></svg>
  </footer>
</div>
</div>

<script>
// Sidebar tree: [level, arrow, icon, label, selected]
const groups = [
  [[0,'open','star','Bookmark'],[1,'shut','folder','wwwroot'],[1,'shut','folder','works'],[1,'shut','folder','self'],[1,'shut','folder','test_file_page',true],[1,'shut','folder','DocStatic'],[1,'shut','folder','Archive'],[1,'shut','folder','editor']],
  [[0,'open','house','Home'],[1,'shut','folder','desktop'],[1,'','folder','works']],
  [[0,'open','pubfolder','Public path'],[1,'','folder','documents'],[1,'shut','folder','share']],
  [[0,'shut','groupfolder','All Group']]
];
const arrow = (kind, color) => kind === 'open'
  ? '<svg class="h-[5px] w-[9px]" viewBox="0 0 9 5"><path d="M0 0h9L4.500 5z" fill="' + color + '"/></svg>'
  : kind === 'shut' ? '<svg class="h-[9px] w-[5px]" viewBox="0 0 5 9"><path d="M0 0l5 4.500L0 9z" fill="' + color + '"/></svg>' : '';
document.getElementById('tree').innerHTML = groups.map(g => '<li class="mb-1"><ul>' + g.map(([lvl, a, icon, label, on]) =>
  '<li class="flex h-[26px] items-center ' + (on ? 'bg-[#00a65a] text-white ' : '') + (lvl ? 'pl-[38px]' : 'pl-[22px]') + '">' +
  '<span class="w-3.5 pb-0.5">' + arrow(a, on ? '#fff' : '#aaa') + '</span>' +
  '<svg class="' + (lvl ? 'mr-2 h-[18px] w-[17px]' : 'mr-2 h-4 w-[18px]') + '" fill="url(#sun)"><use href="#' + icon + '"/></svg>' + label + '</li>').join('') + '</ul></li>').join('');

// Breadcrumb path
document.getElementById('crumbs').innerHTML = ['WebServer','Documents','localhost','test','elFinder-2.x','files','test_file_page'].map((c, i) =>
  '<a href="#" class="flex shrink-0 items-center bg-[#f3f3f3] pb-0.5 ' + (i ? 'pl-[7px]' : '-ml-3.5') + '">' + c + '</a>' +
  '<svg class="h-[26px] w-[13px] shrink-0 bg-[#f3f3f3]" viewBox="0 0 13 26"><path d="M2.500 0l10 13-10 13" fill="none" stroke="#ddd" stroke-width="1.200"/></svg>').join('');

// File list; kind and date are shown where a row has them
const files = [['Archive','','2017/04/06 19:41:48'],['editor','','2017/04/06 19:11:16'],['filesize','','2016/12/27 16:00:13'],['folder','','2016/12/21 22:59:56'],['image','','2016/12/25 16:56:32'],['lazyload','','2016/12/24 21:12:40'],['movie','','2017/04/06 18:21:40'],['office','','2017/03/17 17:03:47'],['safe-xxs-csrf','','2017/03/24 15:38:56'],['self','',''],['split_test','',''],['xxs-url','',''],['图标','Folder',''],['文件名多编码','Folder',''],['文本编码','Folder',''],['自然排序','Folder','']];
document.getElementById('files').innerHTML = '<tr aria-hidden="true"><td colspan="6" class="h-[5px] bg-linear-to-b from-[#f3f3f3] to-white"></td></tr>' + files.map(([n, kind, d], i) => {
  const on = n === 'lazyload', bg = on ? 'bg-[#00a65a] text-white' : i % 2 ? '' : 'bg-[#fff7e6]';
  return '<tr class="h-[29px]"><td></td><td class="' + bg + '"><span class="flex items-center pl-2"><span class="w-[15px]">' + arrow('shut', on ? '#5b8fe0' : '#aaa') + '</span>' +
    '<span class="relative mr-[5px] h-[19px] w-[19px]"><svg class="h-[19px] w-[17px]"><use href="#folder"/></svg>' +
    (n === 'filesize' ? '<svg class="absolute top-[5px] left-2 size-[15px]"><use href="#sharebadge"/></svg>' : '') + '</span>' +
    '<span class="' + (n === 'filesize' ? 'pl-[3px]' : '') + '">' + n + '</span></span></td><td class="pl-[9px] ' + bg + '">' + kind + '</td><td class="' + bg + '"></td><td class="pl-2 ' + bg + '">' + d + '</td><td></td></tr>';
}).join('');
</script>
</body>
</html>
